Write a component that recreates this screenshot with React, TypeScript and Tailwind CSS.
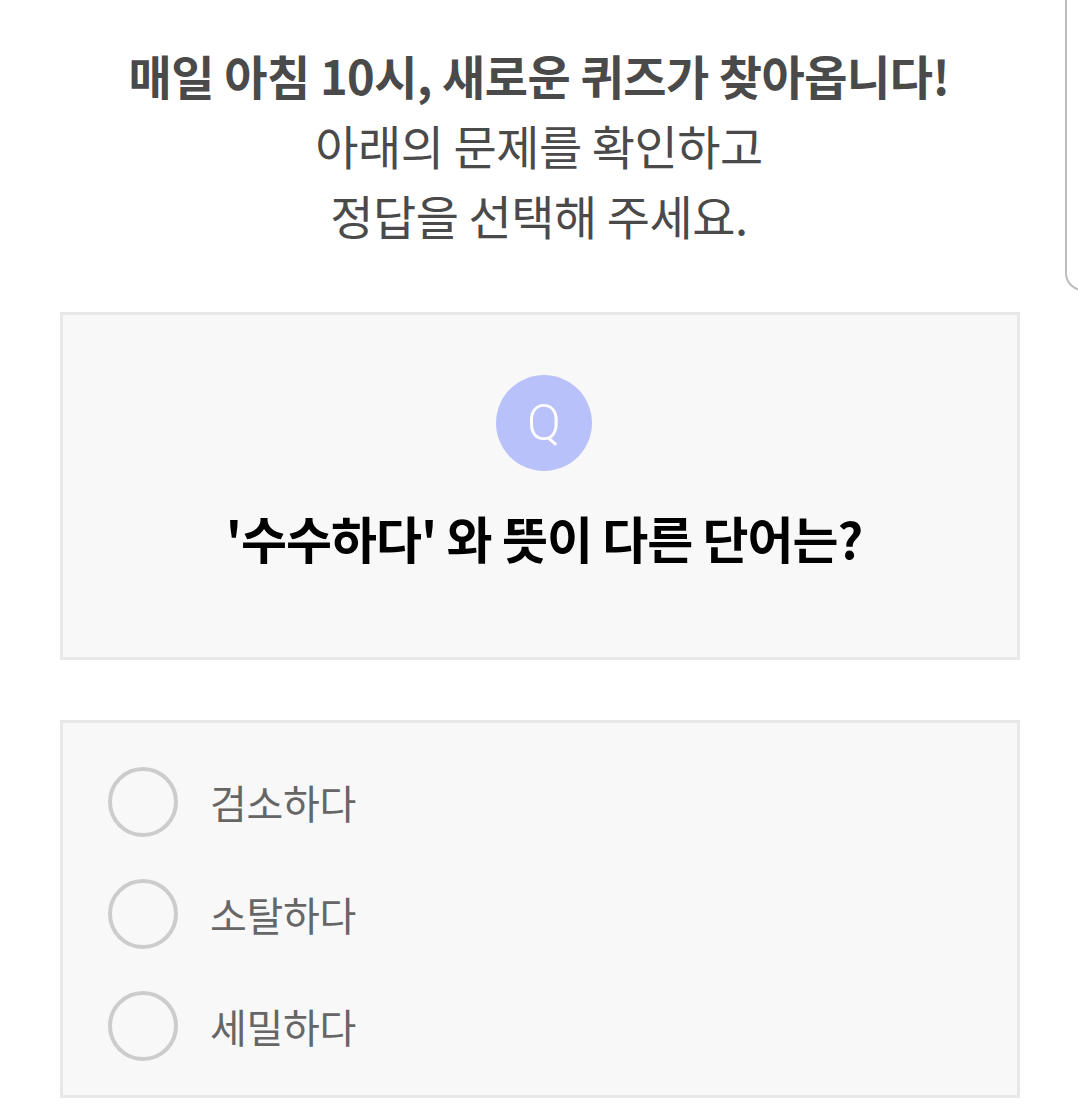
import React from "react";

const font = { fontFamily: '"Noto Sans CJK KR", "Noto Sans", sans-serif' };

function Option({ label }: { label: string }) {
  return (
    <div className="flex items-center h-[70px]">
      <div className="w-[70px] h-[70px] rounded-full border-[4px] border-[#cccccc] shrink-0" />
      <span className="ml-[32px] text-[40px] leading-none text-[#666666] tracking-[-0.3px]">{label}</span>
    </div>
  );
}

export default function App() {
  return (
    <div className="relative w-[1078px] h-[1117px] bg-white overflow-hidden" style={font}>
      <div className="pt-[40px] flex flex-col items-center text-[47px] leading-[70px] text-[#4a4a4a] tracking-[-0.5px]">
        <div className="font-bold">매일 아침 10시, 새로운 퀴즈가 찾아옵니다!</div>
        <div>아래의 문제를 확인하고</div>
        <div>정답을 선택해 주세요.</div>
      </div>

      <div className="mt-[62px] mx-[60px] w-[960px] h-[348px] border-[3px] border-[#e8e8e8] bg-[#f8f8f8] flex flex-col items-center pt-[60px] pl-[8px]">
        <div
          className="w-[96px] h-[96px] rounded-full bg-[#b9c1fb] flex items-center justify-center text-white text-[50px] font-light leading-none"
          style={{ fontFamily: 'Roboto, "Noto Sans", sans-serif' }}
        >
          Q
        </div>
        <div className="mt-[26px] text-[50px] leading-[80px] font-bold text-black tracking-[-1px]">
          '수수하다' 와 뜻이 다른 단어는?
        </div>
      </div>

      <div className="mt-[60px] mx-[60px] w-[960px] h-[378px] border-[3px] border-[#e8e8e8] bg-[#f8f8f8] flex flex-col gap-[42px] pt-[44px] pl-[45px]">
        <Option label="검소하다" />
        <Option label="소탈하다" />
        <Option label="세밀하다" />
      </div>

      <div className="absolute left-[1065px] top-[-20px] w-[30px] h-[311px] border-l-2 border-b-2 border-[#bdbdbd] rounded-bl-[18px]" />
    </div>
  );
}
